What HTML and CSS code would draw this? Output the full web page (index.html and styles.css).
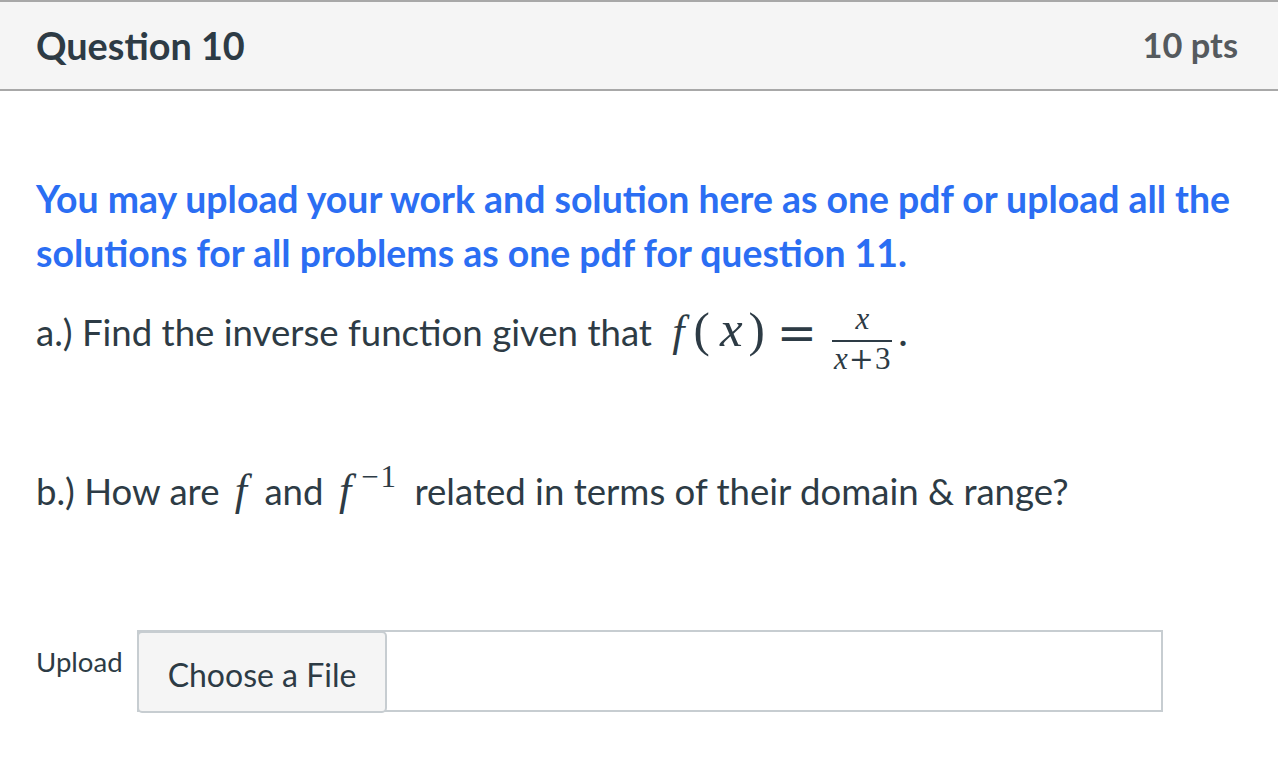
FILE: index.html
```html
<!DOCTYPE html>
<html>
<head>
<meta charset="utf-8">
<link rel="stylesheet" href="styles.css">
</head>
<body>
<div class="question">
  <div class="q-header">
    <h2 class="q-title">Question 10</h2>
    <div class="q-points">10 pts</div>
  </div>
  <div class="q-body">
    <p class="notice">You may upload your work and solution here as one pdf or upload all the solutions for all problems as one pdf for question 11.</p>
    <p class="part part-a">a.) Find the inverse function given that <span class="math"><span class="mi fn fn-a">f</span><span class="mo paren lp">(</span><span class="mi xv">x</span><span class="mo paren rp">)</span><span class="rel">=</span><span class="frac"><span class="num"><span class="mi">x</span></span><span class="den"><span class="mi">x</span><span class="mo plus">+</span><span class="mn">3</span></span></span><span class="mo dot">.</span></span></p>
    <p class="part part-b">b.) How are <span class="math"><span class="mi fn">f</span></span> and <span class="math"><span class="mi fn">f</span><sup class="sup">−1</sup></span> related in terms of their domain &amp; range?</p>
    <div class="upload">
      <label class="upload-label">Upload</label>
      <div class="file-input">
        <button class="file-btn">Choose a File</button>
        <div class="file-name"></div>
      </div>
    </div>
  </div>
</div>
</body>
</html>
```
FILE: styles.css
```css
html, body {
  margin: 0;
  padding: 0;
  background: #ffffff;
}
body {
  font-family: Lato, "Liberation Sans", sans-serif;
  color: #2d3b45;
  width: 1278px;
  height: 780px;
  overflow: hidden;
}
.q-header {
  display: flex;
  justify-content: space-between;
  align-items: center;
  background: #f5f5f5;
  border-top: 2px solid #a8a8a8;
  border-bottom: 2px solid #a8a8a8;
  height: 87px;
  padding: 0 40px 0 36px;
}
.q-title {
  margin: 0;
  font-size: 37.8px;
  font-weight: 700;
  color: #2d3b45;
  line-height: 1;
}
.q-points {
  font-size: 34.4px;
  font-weight: 700;
  color: #555a5e;
  line-height: 1;
}
.q-body {
  padding: 81px 36px 0 36px;
}
.notice {
  margin: 0;
  color: #2b6ef3;
  font-weight: 700;
  font-size: 37.4px;
  line-height: 54px;
}
.part {
  margin: 0;
  font-size: 36.6px;
  line-height: 55px;
  color: #2d3b45;
}
.part-a {
  margin-top: 24px;
}
.part-b {
  margin-top: 90px;
}
.math {
  font-family: "Liberation Serif", "Times New Roman", serif;
  font-size: 44px;
  white-space: nowrap;
}
.mi {
  font-style: italic;
}
.mo, .mn {
  font-style: normal;
}
.fn {
  display: inline-block;
  margin-left: 6px;
  margin-right: 8px;
}
.fn-a {
  margin-left: 11px;
  margin-right: 9px;
}
.paren {
  display: inline-block;
  font-size: 49px;
  line-height: 40px;
}
.lp {
  margin-right: 10px;
}
.xv {
  display: inline-block;
  font-size: 51px;
  line-height: 40px;
  margin-right: 6px;
}
.rel {
  display: inline-block;
  font-family: "DejaVu Serif", serif;
  font-size: 48px;
  line-height: 40px;
  vertical-align: -4px;
  margin: 0 14px 0 12px;
}
.frac {
  display: inline-flex;
  flex-direction: column;
  align-items: center;
  vertical-align: 17px;
  font-size: 31px;
  line-height: 28px;
  padding: 0 1px;
}
.num {
  border-bottom: 2px solid #2d3b45;
  padding: 0 4px 7px;
  align-self: stretch;
  text-align: center;
}
.den {
  padding: 3px 2px 0;
}
.plus {
  font-family: "DejaVu Serif", serif;
  font-size: 30px;
  margin: 0 1px;
}
.dot {
  margin-left: 4px;
}
.sup {
  font-size: 31px;
  font-style: normal;
  vertical-align: 18px;
  line-height: 0;
  margin-left: 2px;
  margin-right: 7px;
  letter-spacing: 2px;
}
.upload {
  display: flex;
  align-items: flex-start;
  margin-top: 111px;
}
.upload-label {
  font-size: 27.6px;
  line-height: 30px;
  margin-top: 17px;
  width: 101px;
}
.file-input {
  display: flex;
  width: 1026px;
  height: 82px;
  border: 2px solid #c7cdd1;
  box-sizing: border-box;
}
.file-btn {
  font-family: Lato, "Liberation Sans", sans-serif;
  font-size: 32px;
  color: #2d3b45;
  background: #f5f5f5;
  border: 2px solid #c7cdd1;
  border-radius: 5px;
  width: 250px;
  height: 82px;
  margin: -1px 0 0 -2px;
  padding: 4px 0 0 0;
}
.file-name {
  flex: 1;
}
```
